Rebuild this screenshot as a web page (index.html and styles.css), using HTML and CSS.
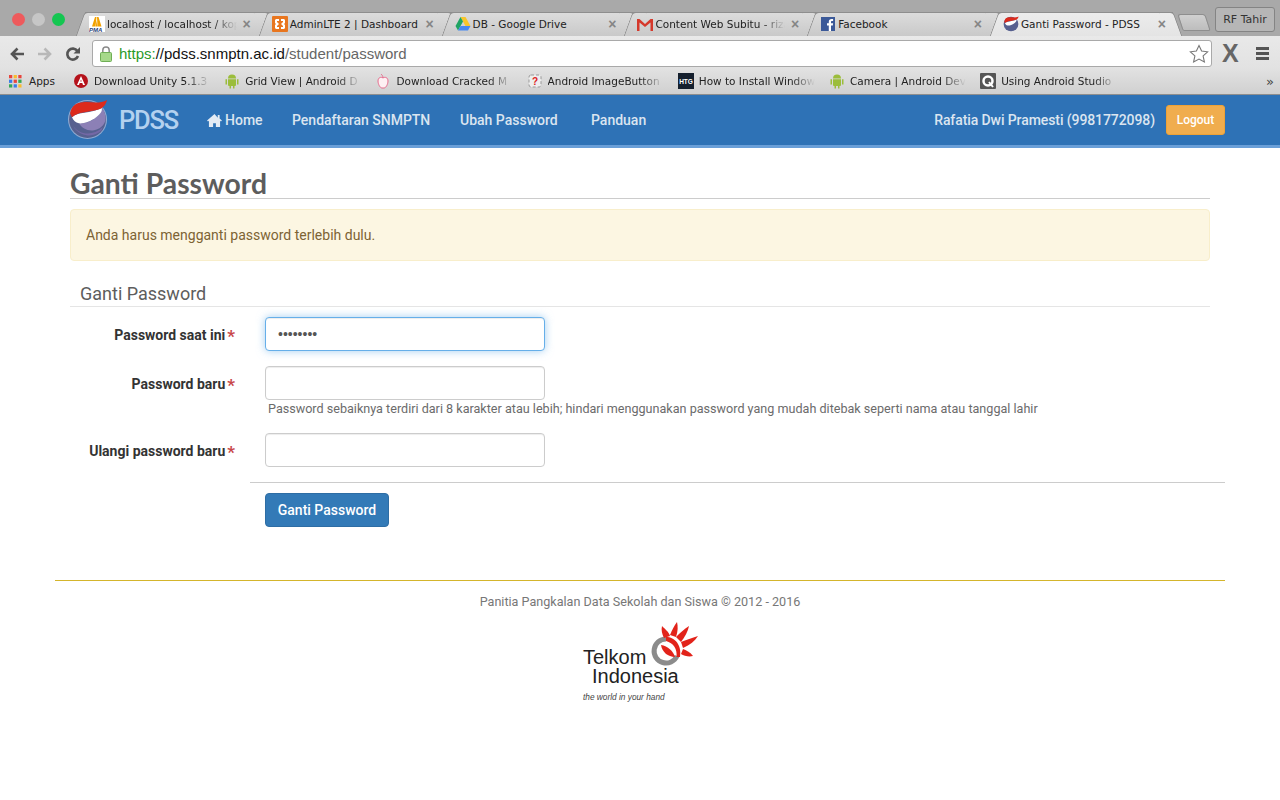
FILE: index.html
```html
<!DOCTYPE html>
<html lang="id">
<head>
    <meta charset="UTF-8">
    <title>Ganti Password - PDSS</title>
    <link rel="stylesheet" href="styles.css">
</head>
<body>
    <div class="browser">
        <div class="tabstrip">
            <div class="lights">
                <span class="light red"></span>
                <span class="light grey"></span>
                <span class="light green"></span>
            </div>
            <div class="tabs">
                <div class="tab">
                    <svg class="fav" viewBox="0 0 16 16"><rect width="16" height="16" fill="#fff"/><path d="M3 10.500 6 1h1.500L6.500 10.500zM8.500 10.500 8 1h1.500l3 9.500zM6.800 10.500 7.700 4l.6 6.500z" fill="#f2a100"/><text x="0" y="15.500" font-size="6" font-weight="700" font-style="italic" fill="#2a3f7a" font-family="Liberation Sans">PMA</text></svg>
                    <span class="tab-title fade">localhost / localhost / kopi</span><span class="close">×</span>
                </div>
                <div class="tab">
                    <svg class="fav" viewBox="0 0 16 16"><rect width="16" height="16" rx="1" fill="#e8761f"/><path d="M4 3h3v2H5v1l2 2-2 2v1h2v2H4l-1-1V9l1-1-1-1V4zM12 3H9v2h2v1L9 8l2 2v1H9v2h3l1-1V9l-1-1 1-1V4z" fill="#fff"/></svg>
                    <span class="tab-title">AdminLTE 2 | Dashboard</span><span class="close">×</span>
                </div>
                <div class="tab">
                    <svg class="fav" viewBox="0 0 16 16"><path d="M5.500 1h5l5 9h-5z" fill="#f7c52b"/><path d="M5.500 1 .5 10l2.500 4.500L8 5.500z" fill="#1fa463"/><path d="M3 14.500h10l2.500-4.500H5.500z" fill="#4688f1"/></svg>
                    <span class="tab-title">DB - Google Drive</span><span class="close">×</span>
                </div>
                <div class="tab">
                    <svg class="fav" viewBox="0 0 16 16"><path d="M0 3h2.500L8 8l5.500-5H16v12h-2.500V6.500L8 11 2.500 6.500V15H0z" fill="#d5392c"/></svg>
                    <span class="tab-title fade">Content Web Subitu - rizal</span><span class="close">×</span>
                </div>
                <div class="tab">
                    <svg class="fav" viewBox="0 0 16 16"><rect width="14" height="14" y="1" x="1" fill="#3b5998"/><path d="M11 15V9.500h1.800l.3-2.200H11V6c0-.6.2-1 1.100-1h1V3.100c-.3 0-.9-.1-1.600-.1C10 3 8.800 3.900 8.800 5.700v1.600H7v2.200h1.800V15z" fill="#fff"/></svg>
                    <span class="tab-title">Facebook</span><span class="close">×</span>
                </div>
                <div class="tab active">
                    <svg class="fav" viewBox="6 7 38 38"><circle cx="25" cy="26" r="17.500" fill="#57608f"/><path d="M9 20.500C10 13 15 10 21 10c7-.5 15 2 22-2-1 4-3 7-6.500 8.300C31 18 26 18.500 21 19.500c-4 .5-8 2-10.300 4.500z" fill="#dc2a1c"/><path d="M10.700 24C14 21 18 20.500 22 19.800c6-.8 11-1.800 16-4.300 1 2.500-1 5.500-5 8.500-5 4-12 6-16 5.500-3-.5-5-2.500-6.300-5.500z" fill="#fff"/></svg>
                    <span class="tab-title">Ganti Password - PDSS</span><span class="close">×</span>
                </div>
                <div class="newtab"></div>
            </div>
            <div class="profile">RF Tahir</div>
        </div>

        <div class="toolbar">
            <svg class="tool" viewBox="0 0 16 16"><path d="M15 8H3M8.500 2.500 3 8l5.500 5.500" fill="none" stroke="#555" stroke-width="2.600"/></svg>
            <svg class="tool" viewBox="0 0 16 16"><path d="M1 8h12M7.500 2.500 13 8l-5.500 5.500" fill="none" stroke="#b8b8b8" stroke-width="2.600"/></svg>
            <svg class="tool" viewBox="0 0 16 16"><path d="M13 10a5.500 5.500 0 1 1-.6-5" fill="none" stroke="#555" stroke-width="2.600"/><path d="M15 1v6.500H8.500z" fill="#555"/></svg>
            <div class="omnibox">
                <svg class="lock" viewBox="0 0 12 16"><path d="M2.800 7V4.200a3.200 3.200 0 0 1 6.400 0V7" fill="none" stroke="#8a8a8a" stroke-width="1.500"/><rect x=".5" y="6.500" width="11" height="9" rx="1" fill="#a6d88a" stroke="#6fae55"/></svg>
                <span class="url"><span class="https">https:</span>//pdss.snmptn.ac.id<span class="path">/student/password</span></span>
                <svg class="star" viewBox="0 0 20 20"><path d="m10 1.500 2.600 5.600 6 .7-4.500 4.100 1.300 6L10 15l-5.400 2.900 1.300-6L1.400 7.800l6-.7z" fill="#fff" stroke="#777" stroke-width="1.100"/></svg>
            </div>
            <span class="ext-x">X</span>
            <div class="burger"><span></span><span></span><span></span></div>
        </div>

        <div class="bookmarks">
            <div class="bm bm-apps">
                <svg class="bm-icon" viewBox="0 0 14 14"><path d="M0 0h3.500v3.500H0z" fill="#e8453c"/><path d="M5 0h3.500v3.500H5z" fill="#f9bb2d"/><path d="M10 0h3.500v3.500H10z" fill="#e8453c"/><path d="M0 5h3.500v3.500H0z" fill="#3a7ce8"/><path d="M5 5h3.500v3.500H5z" fill="#e8453c"/><path d="M10 5h3.500v3.500H10z" fill="#34a853"/><path d="M0 10h3.500v3.500H0z" fill="#34a853"/><path d="M5 10h3.500v3.500H5z" fill="#3a7ce8"/><path d="M10 10h3.500v3.500H10z" fill="#f9bb2d"/></svg>
                <span>Apps</span>
            </div>
            <div class="bm">
                <svg class="bm-icon" viewBox="0 0 16 16"><circle cx="8" cy="8" r="7" fill="#b5121b"/><path d="M8 3 4 12h2l.7-2h2.600l.7 2h2zM7.300 8.500 8 6.500l.7 2z" fill="#fff"/></svg>
                <span class="bm-title">Download Unity 5.1.3</span>
            </div>
            <div class="bm">
                <svg class="bm-icon" viewBox="0 0 16 16"><path d="M4 5.500a4 4 0 0 1 8 0zM4 6.200h8V12a1 1 0 0 1-1 1h-.5v2.500h-1.500V13H7v2.500H5.500V13H5a1 1 0 0 1-1-1zM1.500 6.200h1.500v5.300H1.500zM13 6.200h1.500v5.300H13z" fill="#9bbd3b"/></svg>
                <span class="bm-title">Grid View | Android D</span>
            </div>
            <div class="bm">
                <svg class="bm-icon" viewBox="0 0 16 16"><path d="M8 5c-2-1.500-5-.5-5 3 0 3 2 7 4 7h2c2 0 4-4 4-7 0-3.500-3-4.500-5-3z" fill="#fdf0f3" stroke="#e66a8c"/><path d="M8 5C8 3 7 2 6 1" fill="none" stroke="#e66a8c"/></svg>
                <span class="bm-title">Download Cracked M</span>
            </div>
            <div class="bm">
                <svg class="bm-icon" viewBox="0 0 16 16"><rect x="2" y="2" width="12" height="12" rx="2" fill="#eee" stroke="#999" stroke-dasharray="3 2"/><text x="8" y="12" text-anchor="middle" font-size="10" font-weight="700" fill="#d22" font-family="Liberation Sans">?</text></svg>
                <span class="bm-title">Android ImageButton</span>
            </div>
            <div class="bm">
                <svg class="bm-icon" viewBox="0 0 16 16"><rect width="16" height="16" fill="#16202e"/><text x="8" y="10.500" text-anchor="middle" font-size="6.500" font-weight="700" fill="#fff" font-family="Liberation Sans">HTG</text></svg>
                <span class="bm-title">How to Install Windows</span>
            </div>
            <div class="bm">
                <svg class="bm-icon" viewBox="0 0 16 16"><path d="M4 5.500a4 4 0 0 1 8 0zM4 6.200h8V12a1 1 0 0 1-1 1h-.5v2.500h-1.500V13H7v2.500H5.500V13H5a1 1 0 0 1-1-1zM1.500 6.200h1.500v5.300H1.500zM13 6.200h1.500v5.300H13z" fill="#9bbd3b"/></svg>
                <span class="bm-title">Camera | Android Dev</span>
            </div>
            <div class="bm">
                <svg class="bm-icon" viewBox="0 0 16 16"><rect width="16" height="16" rx="1" fill="#555"/><circle cx="8" cy="8" r="4.500" fill="none" stroke="#fff" stroke-width="2.500"/><path d="m9 9 4 5" stroke="#fff" stroke-width="2"/></svg>
                <span class="bm-title">Using Android Studio</span>
            </div>
            <span class="bm-more">»</span>
        </div>
    </div>

    <nav class="navbar">
        <div class="nav-inner">
            <div class="brand">
                <svg class="brand-logo" viewBox="6.100 7.100 38.700 38.700">
                    <circle cx="25" cy="26" r="18" fill="#8fa9d0"/>
                    <circle cx="25" cy="26" r="17" fill="#57608f"/>
                    <path d="M12 32c5 8 18 10 27 1l-1 3c-7 7-18 6-25-2z" fill="#7468a6"/>
                    <path d="M17 29.500c6 .5 13-2.500 16-5.500 3-2.500 5-5 5-8.500 3 2.500 4 7.500 3.500 11.500-1.500 5-5.500 8-10.500 9-6 1-11-2-14-6.500z" fill="#8c80b6"/>
                    <path d="M10.700 24C14 21 18 20.500 22 19.800c6-.8 11-1.800 16-4.300 1 2.500-1 5.500-5 8.500-5 4-12 6-16 5.500-3-.5-5-2.500-6.300-5.500z" fill="#fff"/>
                    <path d="M9 20.500C10 13 15 10 21 10c7-.5 15 2 22-2-1 4-3 7-6.500 8.300C31 18 26 18.500 21 19.500c-4 .5-8 2-10.300 4.500z" fill="#dc2a1c"/>
                </svg>
                <span class="brand-name">PDSS</span>
            </div>
            <ul class="nav-links">
                <li class="nav-home">
                    <svg class="home-icon" viewBox="0 0 16 14"><path d="M8 0 0 7l1 1 1-.8V14h4.500v-4h3v4H14V7.200l1 .8 1-1-2.500-2.200V1h-2v3z" fill="#e3ebf4"/></svg>
                    Home
                </li>
                <li class="nav-pendaftaran">Pendaftaran SNMPTN</li>
                <li class="nav-ubah">Ubah Password</li>
                <li>Panduan</li>
            </ul>
            <div class="nav-user">
                <span>Rafatia Dwi Pramesti (9981772098)</span>
                <button class="btn-logout">Logout</button>
            </div>
        </div>
    </nav>

    <div class="container">
        <h1 class="page-title">Ganti Password</h1>
        <div class="alert">Anda harus mengganti password terlebih dulu.</div>

        <form class="pw-form">
            <div class="legend">Ganti Password</div>
            <div class="form-row">
                <label class="form-label">Password saat ini<span class="req">*</span></label>
                <div class="form-field">
                    <input class="form-input focused" type="password" value="abcdefgh">
                </div>
            </div>
            <div class="form-row">
                <label class="form-label">Password baru<span class="req">*</span></label>
                <div class="form-field">
                    <input class="form-input" type="password">
                    <div class="hint">Password sebaiknya terdiri dari 8 karakter atau lebih; hindari menggunakan password yang mudah ditebak seperti nama atau tanggal lahir</div>
                </div>
            </div>
            <div class="form-row">
                <label class="form-label">Ulangi password baru<span class="req">*</span></label>
                <div class="form-field">
                    <input class="form-input" type="password">
                </div>
            </div>
            <div class="form-actions">
                <button type="button" class="btn-primary">Ganti Password</button>
            </div>
        </form>

        <footer class="footer">
            <div class="footer-text">Panitia Pangkalan Data Sekolah dan Siswa © 2012 - 2016</div>
            <div class="telkom">
                <svg class="telkom-mark" viewBox="0 0 60 50">
                    <path d="M21 21a12 12 0 1 0 11 17" fill="none" stroke="#8b8b8b" stroke-width="5"/>
                    <path d="M21 19c9 0 16 8 14 20h-3.500c1-8-3-14-10.500-16z" fill="#e2231a"/>
                    <path d="M16 27c7 1 12 6 14 12-7 0-13-5-14-12z" fill="#e2231a"/>
                    <path d="M19 20c-2-4-3-8-2-12 3 3 7 6 8 10z" fill="#e2231a"/>
                    <path d="M25 17c2-5 4-9 7-13 1 4 1 9-1 15z" fill="#e2231a"/>
                    <path d="M31 19c4-4 8-8 13-11-1 5-4 11-8 16z" fill="#e2231a"/>
                    <path d="M36 24c5-2 11-4 17-6-3 5-8 9-15 12z" fill="#e2231a"/>
                    <path d="M38 31c3 1 7 3 10 7-4 1-9 0-12-2z" fill="#e2231a"/>
                </svg>
                <div class="telkom-name">Telkom</div>
                <div class="telkom-name second">Indonesia</div>
                <div class="telkom-tag">the world in your hand</div>
            </div>
        </footer>
    </div>
</body>
</html>
```

FILE: styles.css
```css
* {
    box-sizing: border-box;
}
body {
    margin: 0;
    font-family: Roboto, sans-serif;
    font-size: 14px;
    color: #333;
    background: #fff;
}

/* browser chrome */
.browser {
    font-family: "DejaVu Sans", sans-serif;
    color: #222;
}
.tabstrip {
    height: 36px;
    background: #a9a9a9;
    display: flex;
    position: relative;
}
.lights {
    width: 85px;
    padding: 13px 0 0 12px;
    display: flex;
    gap: 7px;
}
.light {
    width: 13px;
    height: 13px;
    border-radius: 50%;
}
.light.red { background: #ee5a5c; }
.light.grey { background: #c6c6c6; }
.light.green { background: #14c651; }
.tabs {
    display: flex;
    padding-top: 12px;
}
.tab {
    width: 182.800px;
    height: 24px;
    position: relative;
    display: flex;
    align-items: center;
    padding: 0 17px 2px 4px;
    font-size: 10.500px;
    background: linear-gradient(#dcdcdc, #c9c9c9);
    border-top: 1px solid #8e8e8e;
}
.tab::before,
.tab::after {
    content: "";
    position: absolute;
    top: -1px;
    bottom: 0;
    width: 14px;
    background: linear-gradient(#dcdcdc, #c9c9c9);
    border-top: 1px solid #8e8e8e;
}
.tab::before {
    left: -5px;
    transform: skewX(-20deg);
    border-left: 1px solid #8e8e8e;
    border-top-left-radius: 4px;
}
.tab::after {
    right: -5px;
    transform: skewX(20deg);
    border-right: 1px solid #8e8e8e;
    border-top-right-radius: 4px;
}
.tab.active,
.tab.active::before,
.tab.active::after {
    background: linear-gradient(#ececec, #e4e4e4);
}
.tab.active {
    z-index: 2;
    width: 174px;
    padding-right: 7px;
}
.fav {
    width: 16px;
    height: 16px;
    flex: none;
    position: relative;
    z-index: 1;
}
.tab-title {
    flex: 1;
    margin-left: 2px;
    white-space: nowrap;
    overflow: hidden;
    position: relative;
    z-index: 1;
}
.tab-title.fade {
    -webkit-mask-image: linear-gradient(to right, #000 82%, transparent);
    mask-image: linear-gradient(to right, #000 82%, transparent);
}
.close {
    position: relative;
    z-index: 1;
    color: #858585;
    font-size: 14px;
    line-height: 1;
    font-family: "Liberation Sans", sans-serif;
    font-weight: 700;
    margin-left: 6px;
}
.newtab {
    width: 28px;
    height: 17px;
    margin: 2px 0 0 7px;
    background: linear-gradient(#d0d0d0, #bdbdbd);
    border: 1px solid #8e8e8e;
    border-radius: 3px 3px 2px 2px;
    transform: skewX(18deg);
}
.profile {
    position: absolute;
    left: 1215px;
    top: 7px;
    width: 60px;
    height: 25px;
    background: #b6b6b6;
    border: 1px solid #848484;
    border-radius: 3px;
    font-size: 11px;
    line-height: 23px;
    text-align: center;
    color: #333;
}
.toolbar {
    height: 32px;
    background: linear-gradient(#e9e9e9, #e2e2e2);
    display: flex;
    align-items: center;
    padding: 3px 8px 0 9px;
    position: relative;
    z-index: 3;
}
.tool {
    width: 16px;
    height: 16px;
    margin-right: 12px;
    flex: none;
}
.tool:nth-child(3) {
    margin-right: 11px;
}
.omnibox {
    width: 1120px;
    height: 27px;
    background: #fff;
    border: 1px solid #a9a9a9;
    border-radius: 3px;
    display: flex;
    align-items: center;
    padding: 0 2px 0 7px;
}
.lock {
    width: 12px;
    height: 16px;
    flex: none;
}
.url {
    margin-left: 7px;
    flex: 1;
    font-family: "Liberation Sans", sans-serif;
    font-size: 15px;
    color: #111;
}
.https { color: #2a9a2a; }
.path { color: #666; }
.star {
    width: 20px;
    height: 20px;
    flex: none;
}
.ext-x {
    margin-left: 10px;
    width: 24px;
    font-family: "Liberation Sans", sans-serif;
    font-weight: 700;
    font-size: 25px;
    color: #666;
}
.burger {
    margin-left: 10px;
    display: flex;
    flex-direction: column;
    gap: 2px;
}
.burger span {
    width: 13px;
    height: 3px;
    background: #555;
}
.bookmarks {
    height: 27px;
    background: linear-gradient(#e2e2e2, #d0d0d0);
    border-bottom: 1px solid #8e8e8e;
    display: flex;
    align-items: center;
    padding-left: 9px;
    font-size: 10.500px;
}
.bm {
    display: flex;
    align-items: center;
    flex: none;
    width: 151.200px;
}
.bm-apps {
    width: 64px;
}
.bm-apps span {
    margin-left: 7px;
}
.bm-icon {
    width: 16px;
    height: 16px;
    flex: none;
    margin-right: 5px;
}
.bm-apps .bm-icon {
    width: 13px;
    height: 13px;
    margin-right: 0;
}
.bm-title {
    width: 116px;
    white-space: nowrap;
    overflow: hidden;
    -webkit-mask-image: linear-gradient(to right, #000 80%, transparent);
    mask-image: linear-gradient(to right, #000 80%, transparent);
}
.bm-more {
    margin-left: auto;
    margin-right: 6px;
    font-size: 13px;
    color: #444;
}

/* site navbar */
.navbar {
    height: 53px;
    background: #2e72b6;
    border-bottom: 3px solid #6a9fd8;
}
.nav-inner {
    width: 1170px;
    margin: 0 auto;
    height: 50px;
    display: flex;
    align-items: center;
    padding-left: 12px;
}
.brand {
    display: flex;
    align-items: center;
    width: 140px;
}
.brand-logo {
    width: 42px;
    height: 42px;
    flex: none;
}
.brand-name {
    margin-left: 10px;
    font-size: 25.500px;
    font-weight: 500;
    color: #b4d1ef;
    letter-spacing: -1.200px;
}
.nav-links {
    list-style: none;
    margin: 0;
    padding: 0;
    display: flex;
    font-size: 14px;
    font-weight: 500;
    color: #dbe5f0;
}
.nav-home {
    display: flex;
    align-items: center;
    gap: 3px;
    width: 85px;
}
.nav-pendaftaran {
    width: 168px;
}
.nav-ubah {
    width: 131px;
}
.home-icon {
    width: 15px;
    height: 13px;
}
.nav-user {
    margin-left: auto;
    display: flex;
    align-items: center;
    font-weight: 500;
    color: #dbe5f0;
    letter-spacing: -.09px;
}
.btn-logout {
    margin-left: 11px;
    width: 59px;
    height: 30px;
    background: #f0ad4e;
    border: 1px solid #eea236;
    border-radius: 3px;
    color: #fff;
    font-family: Roboto, sans-serif;
    font-size: 12px;
    font-weight: 500;
    padding: 0;
}

/* page */
.container {
    width: 1170px;
    margin: 0 auto;
}
.page-title {
    margin: 17px 15px 10px;
    height: 34px;
    font-family: Lato, sans-serif;
    font-size: 28.300px;
    line-height: 36px;
    font-weight: 700;
    color: #5d5d5d;
    border-bottom: 1px solid #ccc;
}
.alert {
    margin: 0 15px;
    height: 52px;
    padding: 0 15px;
    line-height: 50px;
    background: #fcf6e2;
    border: 1px solid #f8eecb;
    border-radius: 4px;
    color: #7d6334;
}
.pw-form {
    margin-top: 20px;
}
.legend {
    margin: 0 15px;
    padding-left: 10px;
    height: 26px;
    font-size: 18px;
    line-height: 26px;
    color: #5d5d5d;
    border-bottom: 1px solid #e5e5e5;
}
.form-row {
    display: flex;
    margin-top: 10px;
    margin-bottom: 15px;
}
.form-row + .form-row {
    margin-top: 0;
}
.form-label {
    width: 195px;
    padding: 10px 15px 0 0;
    text-align: right;
    font-weight: 700;
    color: #333;
}
.req {
    color: #c8474a;
    margin-left: 2px;
    font-size: 17px;
    line-height: 14px;
    vertical-align: -2px;
}
.form-field {
    padding-left: 15px;
    flex: 1;
}
.form-input {
    display: block;
    width: 280px;
    height: 34px;
    padding: 6px 12px;
    font-size: 14px;
    color: #555;
    background: #fff;
    border: 1px solid #ccc;
    border-radius: 4px;
    box-shadow: inset 0 1px 1px rgba(0, 0, 0, .075);
}
.form-input.focused {
    border-color: #66afe9;
    box-shadow: inset 0 1px 1px rgba(0, 0, 0, .075), 0 0 8px rgba(102, 175, 233, .6);
}
.hint {
    padding-left: 3px;
    font-size: 12.600px;
    line-height: 18px;
    color: #6b6b6b;
}
.form-actions {
    margin-left: 195px;
    margin-top: 15px;
    padding: 10px 0 0 15px;
    border-top: 1px solid #ccc;
}
.btn-primary {
    width: 124px;
    height: 34px;
    padding: 0;
    background: #337ab7;
    border: 1px solid #2e6da4;
    border-radius: 4px;
    color: #fff;
    font-family: Roboto, sans-serif;
    font-size: 14px;
    font-weight: 500;
}
.footer {
    margin-top: 53px;
    border-top: 1px solid #d4b52c;
    padding-top: 13px;
    text-align: center;
}
.footer-text {
    font-size: 12.600px;
    line-height: 16px;
    color: #777;
}
.telkom {
    position: relative;
    width: 114px;
    height: 84px;
    margin: 8px auto 0;
    text-align: left;
    color: #222;
    font-family: "Liberation Sans", sans-serif;
}
.telkom-mark {
    position: absolute;
    left: 62px;
    top: 0;
    width: 60px;
    height: 50px;
}
.telkom-name {
    position: absolute;
    left: 0;
    top: 30px;
    font-size: 20px;
    line-height: 19px;
}
.telkom-name.second {
    left: 9px;
    top: 49px;
}
.telkom-tag {
    position: absolute;
    left: 0;
    top: 74px;
    font-size: 8.300px;
    font-style: italic;
    color: #444;
    white-space: nowrap;
}
```
